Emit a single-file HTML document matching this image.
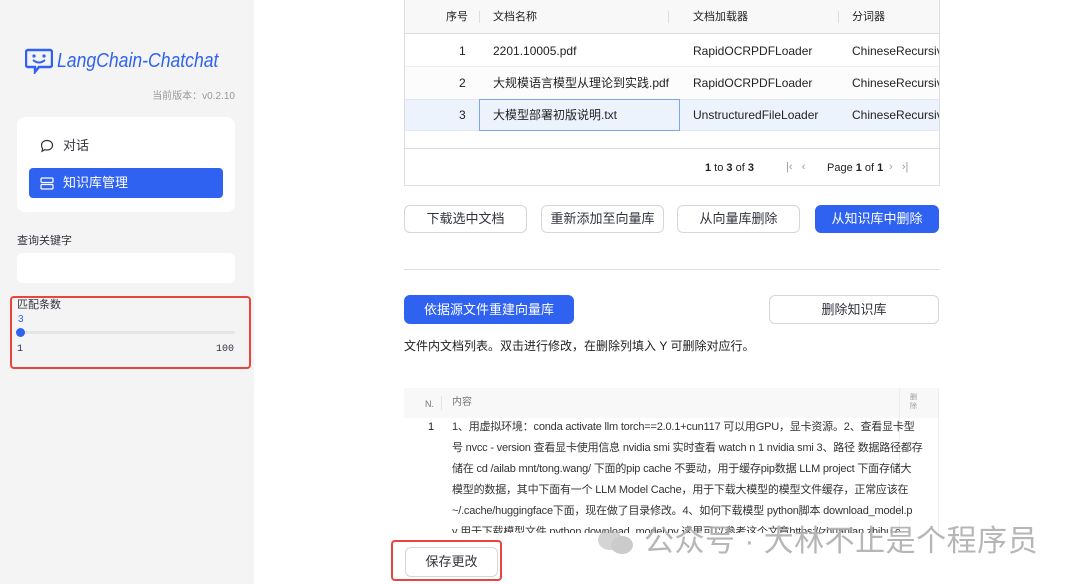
<!DOCTYPE html><html><head><meta charset="utf-8"><style>
*{box-sizing:border-box;margin:0;padding:0}
body{width:1080px;height:584px;overflow:hidden;background:#fff;font-family:"Liberation Sans","Noto Sans CJK SC",sans-serif;color:#31333f;position:relative;font-size:13px}
.a{position:absolute;line-height:14px}
.side{left:0;top:0;width:254px;height:584px;background:#f4f4f4}
.btn{position:absolute;border:1px solid #d5d6db;border-radius:6px;background:#fff;font-size:13px;display:flex;align-items:center;justify-content:center;color:#31333f;line-height:14px}
.blue{background:#2f62f1;color:#fff;border-color:#2f62f1}
.cell{position:absolute;font-size:12px;color:#222;line-height:14px;white-space:nowrap}
.ln{position:absolute;left:452px;font-size:11px;color:#333;white-space:nowrap;letter-spacing:-0.2px;line-height:14px}
</style></head><body>
<div class="a side"></div>
<svg class="a" style="left:25px;top:48px" width="28" height="26" viewBox="0 0 28 26"><path d="M3 2h22a2 2 0 0 1 2 2v13a2 2 0 0 1-2 2H14l-4 5v-5H3a2 2 0 0 1-2-2V4a2 2 0 0 1 2-2z" fill="none" stroke="#2f62f1" stroke-width="2.4"/><circle cx="9" cy="8" r="1.6" fill="#2f62f1"/><circle cx="19" cy="8" r="1.6" fill="#2f62f1"/><path d="M8 12q6 5 12 0" fill="none" stroke="#2f62f1" stroke-width="2"/></svg>
<div class="a" style="left:57px;top:50px;font-size:20px;line-height:22px;font-style:italic;color:#2f62f1;transform:scaleX(0.88);transform-origin:0 0;white-space:nowrap">LangChain-Chatchat</div>
<div class="a" style="left:130px;width:105px;text-align:right;top:90px;font-size:10px;color:#999;white-space:nowrap">当前版本：v0.2.10</div>
<div class="a" style="left:17px;top:117px;width:218px;height:95px;background:#fff;border-radius:8px"></div>
<svg class="a" style="left:40px;top:139px" width="14" height="14" viewBox="0 0 14 14"><path d="M7 1.5c3.2 0 5.5 2 5.5 4.8S10.2 11 7 11c-.8 0-1.5-.1-2.2-.3L2 12.3l.6-2.6C1.8 8.8 1.5 7.6 1.5 6.3 1.5 3.5 3.8 1.5 7 1.5z" fill="none" stroke="#333" stroke-width="1.2"/></svg>
<div class="a" style="left:63px;top:139px;font-size:13px">对话</div>
<div class="a" style="left:29px;top:168px;width:194px;height:30px;background:#2f62f1;border-radius:4px"></div>
<svg class="a" style="left:40px;top:177px" width="14" height="13" viewBox="0 0 14 13"><rect x="1" y="1" width="12" height="4.5" rx="1" fill="none" stroke="#fff" stroke-width="1.2"/><rect x="1" y="7.5" width="12" height="4.5" rx="1" fill="none" stroke="#fff" stroke-width="1.2"/></svg>
<div class="a" style="left:63px;top:176px;font-size:13px;color:#fff">知识库管理</div>
<div class="a" style="left:17px;top:234px;font-size:11px">查询关键字</div>
<div class="a" style="left:17px;top:253px;width:218px;height:30px;background:#fff;border-radius:6px"></div>
<div class="a" style="left:10px;top:296px;width:241px;height:73px;border:2px solid #e8453c;border-radius:4px"></div>
<div class="a" style="left:17px;top:298px;font-size:11px">匹配条数</div>
<div class="a" style="left:18px;top:313px;font-size:10px;color:#2f62f1">3</div>
<div class="a" style="left:17px;top:331px;width:218px;height:3px;background:#e5e5e8;border-radius:2px"></div>
<div class="a" style="left:16px;top:328px;width:9px;height:9px;background:#2f62f1;border-radius:50%"></div>
<div class="a" style="left:17px;top:343px;font-size:10px;font-family:'Liberation Mono',monospace">1</div>
<div class="a" style="left:216px;top:343px;font-size:10px;font-family:'Liberation Mono',monospace">100</div>

<div class="a" style="left:404px;top:-2px;width:536px;height:188px;border:1px solid #ddd"></div>
<div class="a" style="left:405px;top:0;width:534px;height:34px;background:#f8f8f8;border-bottom:1px solid #ddd"></div>
<div class="cell" style="left:446px;top:10px;font-size:11px">序号</div>
<div class="cell" style="left:493px;top:10px;font-size:11px">文档名称</div>
<div class="cell" style="left:693px;top:10px;font-size:11px">文档加载器</div>
<div class="cell" style="left:852px;top:10px;font-size:11px">分词器</div>
<div class="a" style="left:479px;top:11px;width:1px;height:12px;background:#ddd"></div>
<div class="a" style="left:668px;top:11px;width:1px;height:12px;background:#ddd"></div>
<div class="a" style="left:838px;top:11px;width:1px;height:12px;background:#ddd"></div>
<div class="a" style="left:405px;top:66px;width:534px;height:1px;background:#eee"></div>
<div class="a" style="left:405px;top:67px;width:534px;height:32px;background:#fcfcfc"></div>
<div class="a" style="left:405px;top:99px;width:534px;height:32px;background:#edf3fd;border-top:1px solid #e4e8ee;border-bottom:1px solid #e4e8ee"></div>
<div class="a" style="left:479px;top:99px;width:201px;height:32px;border:1px solid #7aa7e6"></div>
<div class="cell" style="left:459px;top:44px">1</div><div class="cell" style="left:493px;top:44px">2201.10005.pdf</div><div class="cell" style="left:693px;top:44px">RapidOCRPDFLoader</div><div class="cell" style="left:852px;top:44px;width:87px;overflow:hidden">ChineseRecursiveTextSplitter</div>
<div class="cell" style="left:459px;top:76px">2</div><div class="cell" style="left:493px;top:76px">大规模语言模型从理论到实践.pdf</div><div class="cell" style="left:693px;top:76px">RapidOCRPDFLoader</div><div class="cell" style="left:852px;top:76px;width:87px;overflow:hidden">ChineseRecursiveTextSplitter</div>
<div class="cell" style="left:459px;top:108px">3</div><div class="cell" style="left:493px;top:108px">大模型部署初版说明.txt</div><div class="cell" style="left:693px;top:108px">UnstructuredFileLoader</div><div class="cell" style="left:852px;top:108px;width:87px;overflow:hidden">ChineseRecursiveTextSplitter</div>
<div class="a" style="left:405px;top:148px;width:534px;height:1px;background:#ddd"></div>
<div class="cell" style="left:705px;top:161px;font-size:11px"><b>1</b> to <b>3</b> of <b>3</b></div>
<div class="cell" style="left:786px;top:160px;font-size:11px;color:#999">|‹ &nbsp;&nbsp;‹</div>
<div class="cell" style="left:827px;top:161px;font-size:11px">Page <b>1</b> of <b>1</b></div>
<div class="cell" style="left:889px;top:160px;font-size:11px;color:#999">› &nbsp;&nbsp;›|</div>

<div class="btn" style="left:404px;top:205px;width:123px;height:28px">下载选中文档</div>
<div class="btn" style="left:541px;top:205px;width:123px;height:28px">重新添加至向量库</div>
<div class="btn" style="left:677px;top:205px;width:123px;height:28px">从向量库删除</div>
<div class="btn blue" style="left:815px;top:205px;width:124px;height:28px">从知识库中删除</div>
<div class="a" style="left:404px;top:269px;width:535px;height:1px;background:#ddd"></div>
<div class="btn blue" style="left:404px;top:295px;width:170px;height:29px">依据源文件重建向量库</div>
<div class="btn" style="left:769px;top:295px;width:170px;height:29px">删除知识库</div>
<div class="a" style="left:404px;top:339px;font-size:12px;color:#222">文件内文档列表。双击进行修改，在删除列填入 Y 可删除对应行。</div>

<div class="a" style="left:404px;top:388px;width:535px;height:30px;background:#f8f8f8"></div>
<div class="a" style="left:404px;top:388px;width:535px;height:145px;border-right:1px solid #eee"></div>
<div class="a" style="left:899px;top:388px;width:1px;height:145px;background:#eee"></div>
<div class="a" style="left:441px;top:396px;width:1px;height:14px;background:#e4e4e4"></div>
<div class="cell" style="left:425px;top:397px;font-size:9px;color:#777">N.</div>
<div class="cell" style="left:452px;top:396px;font-size:10px;color:#777">内容</div>
<div class="cell" style="left:910px;top:393px;font-size:7px;color:#999;line-height:9px">删<br>除</div>
<div class="cell" style="left:428px;top:420px;font-size:11px">1</div>
<div class="ln" style="top:420px">1、用虚拟环境：conda activate llm torch==2.0.1+cun117 可以用GPU，显卡资源。2、查看显卡型</div>
<div class="ln" style="top:441px">号 nvcc - version 查看显卡使用信息 nvidia smi 实时查看 watch n 1 nvidia smi 3、路径 数据路径都存</div>
<div class="ln" style="top:462px">储在 cd /ailab mnt/tong.wang/ 下面的pip cache 不要动，用于缓存pip数据 LLM project 下面存储大</div>
<div class="ln" style="top:483px">模型的数据，其中下面有一个 LLM Model Cache，用于下载大模型的模型文件缓存，正常应该在</div>
<div class="ln" style="top:504px">~/.cache/huggingface下面，现在做了目录修改。4、如何下载模型 python脚本 download_model.p</div>
<div class="a" style="left:440px;top:522px;width:460px;height:11px;overflow:hidden"><div class="ln" style="left:12px;top:3px">y 用于下载模型文件 python download_model.py 这里可以参考这个文章https://zhuanlan.zhihu.c</div></div>
<div class="a" style="left:404px;top:533px;width:540px;height:51px;background:#fff"></div>
<div class="a" style="left:391px;top:540px;width:111px;height:41px;border:2px solid #e8453c;border-radius:4px"></div>
<div class="btn" style="left:405px;top:547px;width:93px;height:30px">保存更改</div>
<svg class="a" style="left:596px;top:527px;opacity:.5" width="40" height="30" viewBox="0 0 40 30"><ellipse cx="14" cy="13" rx="12" ry="10" fill="#aaa"/><ellipse cx="26" cy="18" rx="11" ry="9" fill="#999"/></svg>
<div class="a" style="left:644px;top:526px;font-size:30px;line-height:32px;color:#aaa;opacity:.85;white-space:nowrap;letter-spacing:0.5px">公众号 · 大林不止是个程序员</div>
</body></html>
